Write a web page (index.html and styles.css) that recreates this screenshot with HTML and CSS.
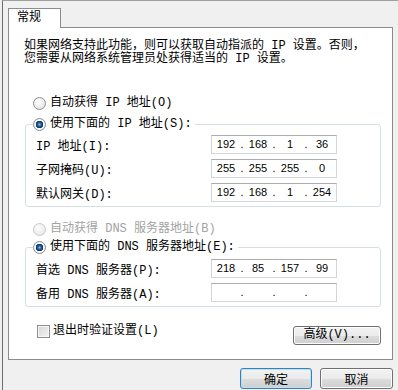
FILE: index.html
```html
<!DOCTYPE html>
<html lang="zh-CN">
<head>
    <meta charset="UTF-8">
    <title>Internet 协议版本 4 (TCP/IPv4) 属性</title>
    <link rel="stylesheet" href="styles.css">
</head>
<body>

    <div class="frame">
        <div class="tabs">
            <div class="tab">常规</div>
        </div>

        <div class="panel">
            <p class="desc">如果网络支持此功能，则可以获取自动指派的 IP 设置。否则，<br>您需要从网络系统管理员处获得适当的 IP 设置。</p>

            <div class="opt first-opt"><span class="radio"></span>自动获得 IP 地址(O)</div>

            <fieldset class="group">
                <legend class="opt"><span class="radio on"></span>使用下面的 IP 地址(S):</legend>
                <div class="row">
                    <span class="label">IP 地址(I):</span>
                    <div class="ipbox"><span class="seg">192</span><span class="dot">.</span><span class="seg">168</span><span class="dot">.</span><span class="seg">1</span><span class="dot">.</span><span class="seg">36</span></div>
                </div>
                <div class="row">
                    <span class="label">子网掩码(U):</span>
                    <div class="ipbox"><span class="seg">255</span><span class="dot">.</span><span class="seg">255</span><span class="dot">.</span><span class="seg">255</span><span class="dot">.</span><span class="seg">0</span></div>
                </div>
                <div class="row">
                    <span class="label">默认网关(D):</span>
                    <div class="ipbox"><span class="seg">192</span><span class="dot">.</span><span class="seg">168</span><span class="dot">.</span><span class="seg">1</span><span class="dot">.</span><span class="seg">254</span></div>
                </div>
            </fieldset>

            <div class="opt dns-auto disabled"><span class="radio"></span>自动获得 DNS 服务器地址(B)</div>

            <fieldset class="group dns">
                <legend class="opt"><span class="radio on"></span>使用下面的 DNS 服务器地址(E):</legend>
                <div class="row">
                    <span class="label">首选 DNS 服务器(P):</span>
                    <div class="ipbox"><span class="seg">218</span><span class="dot">.</span><span class="seg">85</span><span class="dot">.</span><span class="seg">157</span><span class="dot">.</span><span class="seg">99</span></div>
                </div>
                <div class="row">
                    <span class="label">备用 DNS 服务器(A):</span>
                    <div class="ipbox"><span class="seg"></span><span class="dot">.</span><span class="seg"></span><span class="dot">.</span><span class="seg"></span><span class="dot">.</span><span class="seg"></span></div>
                </div>
            </fieldset>

            <div class="bottom-row">
                <div class="opt check-opt"><span class="check"></span>退出时验证设置(L)</div>
                <button class="btn advanced">高级(V)...</button>
            </div>
        </div>

        <div class="actions">
            <button class="btn default">确定</button>
            <button class="btn">取消</button>
        </div>
    </div>

</body>
</html>
```

FILE: styles.css
```css
body {
    margin: 0;
    background-color: #f0f0f0;
    font-family: "Liberation Mono", "Noto Sans CJK SC", monospace;
    font-size: 12px;
    color: #000;
}
.frame {
    margin-left: 2px;
    height: 389px;
    border-top: 1px solid #a0a0a0;
    border-left: 1px solid #6e6e6e;
    padding: 7px 0 0 5px;
}
.tabs {
    display: flex;
}
.tab {
    position: relative;
    z-index: 1;
    width: 53px;
    height: 20px;
    box-sizing: border-box;
    padding: 2px 0 0 8px;
    margin-bottom: -1px;
    background: #fff;
    border: 1px solid #898c95;
    border-bottom: none;
    line-height: 14px;
}
.panel {
    width: 385px;
    height: 333px;
    box-sizing: border-box;
    background: #fff;
    border: 1px solid #898c95;
    padding: 12px 0 0 15px;
}
.desc {
    margin: 0;
    line-height: 13px;
}
.opt {
    display: flex;
    align-items: center;
    line-height: 14px;
    white-space: nowrap;
}
.first-opt {
    margin: 30px 0 0 9px;
}
.radio {
    width: 13px;
    height: 13px;
    box-sizing: border-box;
    border-radius: 50%;
    border: 1px solid #8c8f94;
    background: radial-gradient(circle at 40% 35%, #ffffff, #dcdcdc);
    margin-right: 4px;
    flex-shrink: 0;
}
.radio.on {
    background: radial-gradient(circle, #7fb8e8 0, #1c5d98 2px, #0b2f57 3.5px, #ffffff 4px, #e6e6e6 6px);
}
.disabled {
    color: #a3a3a3;
}
.disabled .radio {
    border-color: #c8c8c8;
    background: radial-gradient(circle at 40% 35%, #fbfbfb, #e6e6e6);
}
.group {
    margin: 7px 0 0 1px;
    width: 356px;
    box-sizing: border-box;
    border: 1px solid #d5dfe5;
    border-radius: 3px;
    padding: 4px 0 4px 10px;
    min-inline-size: 0;
}
.group legend {
    margin-left: -3px;
    padding: 0 3px 0 0;
}
.row {
    display: flex;
    align-items: center;
    height: 19px;
    margin-top: 5px;
}
.row:first-of-type {
    margin-top: 0;
}
.label {
    width: 175px;
    white-space: nowrap;
}
.ipbox {
    display: flex;
    width: 126px;
    height: 19px;
    box-sizing: border-box;
    border: 1px solid #d2d6dc;
    border-top-color: #abadb3;
    font-family: "Liberation Sans", "DejaVu Sans", sans-serif;
    font-size: 11px;
    line-height: 17px;
}
.seg {
    flex: 1;
    text-align: center;
}
.dot {
    width: 4px;
    text-align: center;
}
.dns-auto {
    margin: 15px 0 0 9px;
}
.dns {
    margin-top: 4px;
    padding-top: 5px;
}
.bottom-row {
    display: flex;
    justify-content: space-between;
    align-items: flex-start;
    width: 356px;
    margin: 17px 0 0 1px;
}
.check-opt {
    margin-left: 12px;
}
.check {
    width: 13px;
    height: 13px;
    box-sizing: border-box;
    border: 1px solid #8e8f8f;
    background: linear-gradient(135deg, #d6d6d6, #f4f4f4);
    box-shadow: inset 0 0 0 1px #f6f6f6;
    margin-right: 3px;
}
.btn {
    font-family: "Noto Sans CJK SC", sans-serif;
    font-size: 12px;
    color: #000;
    height: 21px;
    padding: 0;
    border: 1px solid #707070;
    border-radius: 3px;
    background: linear-gradient(#f2f2f2 0, #ebebeb 50%, #dddddd 50%, #cfcfcf 100%);
    box-shadow: inset 0 0 0 1px #fcfcfc;
    line-height: 17px;
}
.advanced {
    width: 88px;
    height: 19px;
    margin-top: 2px;
    font-family: "Liberation Mono", "Noto Sans CJK SC", monospace;
}
.actions {
    display: flex;
    justify-content: flex-end;
    gap: 8px;
    width: 385px;
    margin-top: 8px;
}
.actions .btn {
    width: 72px;
}
.actions .btn:last-child {
    width: 73px;
}
.btn.default {
    border-color: #3c7fb1;
    box-shadow: inset 0 0 0 1px #b5e4f8;
}
```
